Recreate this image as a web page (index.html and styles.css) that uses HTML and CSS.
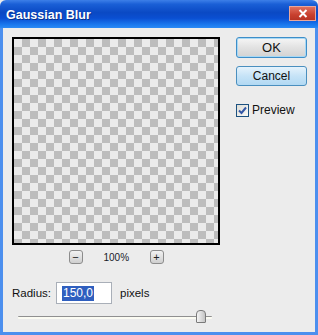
FILE: index.html
```html
<!DOCTYPE html>
<html lang="en">
<head>
    <meta charset="UTF-8">
    <title>Gaussian Blur</title>
    <link rel="stylesheet" href="styles.css">
</head>
<body>
    <div class="window">
        <div class="titlebar">
            <span class="title">Gaussian Blur</span>
            <span class="close">
                <svg width="10" height="9" viewBox="0 0 10 9"><path d="M1.5 1 L8.5 8 M8.5 1 L1.5 8" stroke="#fff" stroke-width="2"/></svg>
            </span>
        </div>
        <div class="client">
            <div class="left">
                <div class="preview"></div>
                <div class="zoom-row">
                    <span class="zbtn">&minus;</span>
                    <span class="pct">100%</span>
                    <span class="zbtn">+</span>
                </div>
                <div class="radius-row">
                    <span class="label">Radius:</span>
                    <span class="field"><span class="sel">150,0</span></span>
                    <span class="label">pixels</span>
                </div>
                <div class="slider">
                    <div class="track"></div>
                    <div class="thumb"></div>
                </div>
            </div>
            <div class="right">
                <div class="btn btn-ok">OK</div>
                <div class="btn btn-cancel">Cancel</div>
                <label class="check">
                    <span class="box">
                        <svg width="9" height="9" viewBox="0 0 9 9"><path d="M1 4.5 L3.5 7 L8 1.5" stroke="#3457a6" stroke-width="2" fill="none"/></svg>
                    </span>
                    Preview
                </label>
            </div>
        </div>
    </div>
</body>
</html>
```

FILE: styles.css
```css
body {
    margin: 0;
    padding: 0;
    background: #ececec;
    font-family: 'Liberation Sans', Arial, sans-serif;
}
.window {
    width: 318px;
    height: 335px;
    box-sizing: border-box;
    display: flex;
    flex-direction: column;
    background: #ececec;
}
.titlebar {
    height: 28px;
    flex: none;
    display: flex;
    align-items: center;
    justify-content: space-between;
    padding: 0 2px 0 6px;
    background: linear-gradient(to bottom, #3d7fe8 0%, #1a5fd6 15%, #0a49c4 45%, #0a4fd2 65%, #1a78ee 88%, #2a8af5 100%);
    border-radius: 6px 6px 0 0;
}
.title {
    color: #fff;
    font-weight: bold;
    font-size: 12.5px;
    margin-top: 2px;
    text-shadow: 1px 1px 0 #0a2f8a;
}
.close {
    width: 27px;
    height: 15px;
    margin-top: -2px;
    display: flex;
    align-items: center;
    justify-content: center;
    background: linear-gradient(to bottom, #e0705e, #c8402e 60%, #b83424);
    border: 1px solid #e9a79c;
    box-sizing: border-box;
}
.client {
    flex: 1;
    display: flex;
    padding: 9px 0 0 9px;
    border: 3px solid #4c8fee;
    border-top: none;
    box-sizing: border-box;
}
.left {
    width: 208px;
    display: flex;
    flex-direction: column;
}
.preview {
    width: 208px;
    height: 208px;
    box-sizing: border-box;
    border: 2px solid #000;
    background: repeating-conic-gradient(#bdbdbd 0 25%, #ebebeb 0 50%) 0 0 / 16px 16px;
}
.zoom-row {
    display: flex;
    align-items: center;
    justify-content: center;
    gap: 21px;
    margin-top: 5px;
    height: 14px;
}
.zbtn {
    width: 14px;
    height: 14px;
    box-sizing: border-box;
    border: 1px solid #8c8c8c;
    border-radius: 3px;
    background: linear-gradient(to bottom, #f2f2f2, #cfcfcf);
    font-size: 11px;
    line-height: 12px;
    text-align: center;
    color: #222;
}
.pct {
    font-size: 10px;
    color: #1a1a2a;
    width: 25px;
    text-align: center;
}
.radius-row {
    display: flex;
    align-items: center;
    margin-top: 18px;
    height: 22px;
    font-size: 11.5px;
    color: #111;
}
.field {
    width: 56px;
    height: 22px;
    box-sizing: border-box;
    margin: 0 8px 0 5px;
    border: 1px solid #a9afb8;
    background: #fff;
    display: flex;
    align-items: center;
    padding-left: 5px;
}
.sel {
    background: #2f5fbf;
    color: #fff;
    font-size: 12px;
    padding: 1px 1px;
    line-height: 13px;
}
.slider {
    position: relative;
    height: 20px;
    margin-top: 4px;
}
.track {
    position: absolute;
    left: 6px;
    top: 8px;
    width: 194px;
    height: 1px;
    background: #909090;
    border-bottom: 2px solid #fbfbf2;
    border-radius: 1px;
}
.thumb {
    position: absolute;
    left: 184px;
    top: 2px;
    width: 10px;
    height: 13px;
    box-sizing: border-box;
    border: 1px solid #7a7a7a;
    border-radius: 4px 4px 1px 1px;
    background: linear-gradient(to right, #f4f4f4, #c4c4c4);
}
.right {
    display: flex;
    flex-direction: column;
    margin-left: 16px;
    width: 71px;
}
.btn {
    height: 21px;
    box-sizing: border-box;
    border-radius: 3px;
    font-size: 12px;
    display: flex;
    align-items: center;
    justify-content: center;
    color: #111;
}
.btn-ok {
    border: 1px solid #3d8ec9;
    box-shadow: inset 0 0 0 1px #a8d8f4;
    background: linear-gradient(to bottom, #f6f6f6, #e2e2e2 50%, #d2d2d2);
    font-size: 13px;
}
.btn-cancel {
    margin-top: 8px;
    height: 20px;
    border: 1px solid #4a8fbf;
    background: linear-gradient(to bottom, #e6f3fc, #c6e3f7 50%, #b2d9f3);
}
.check {
    display: flex;
    align-items: center;
    margin-top: 17px;
    font-size: 12px;
    color: #111;
}
.box {
    width: 13px;
    height: 13px;
    box-sizing: border-box;
    border: 1px solid #1c5180;
    background: linear-gradient(135deg, #dcdcd6, #fafaf8);
    display: flex;
    align-items: center;
    justify-content: center;
    margin-right: 3px;
}
```
